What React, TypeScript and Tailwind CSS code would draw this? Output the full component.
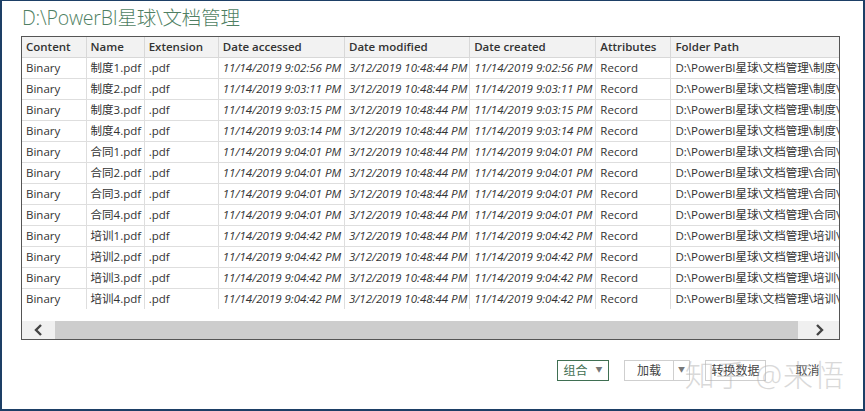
import React from 'react';

const rows = [
  ['制度1.pdf', '11/14/2019 9:02:56 PM', '11/14/2019 9:02:56 PM', '制度'],
  ['制度2.pdf', '11/14/2019 9:03:11 PM', '11/14/2019 9:03:11 PM', '制度'],
  ['制度3.pdf', '11/14/2019 9:03:15 PM', '11/14/2019 9:03:15 PM', '制度'],
  ['制度4.pdf', '11/14/2019 9:03:14 PM', '11/14/2019 9:03:14 PM', '制度'],
  ['合同1.pdf', '11/14/2019 9:04:01 PM', '11/14/2019 9:04:01 PM', '合同'],
  ['合同2.pdf', '11/14/2019 9:04:01 PM', '11/14/2019 9:04:01 PM', '合同'],
  ['合同3.pdf', '11/14/2019 9:04:01 PM', '11/14/2019 9:04:01 PM', '合同'],
  ['合同4.pdf', '11/14/2019 9:04:01 PM', '11/14/2019 9:04:01 PM', '合同'],
  ['培训1.pdf', '11/14/2019 9:04:42 PM', '11/14/2019 9:04:42 PM', '培训'],
  ['培训2.pdf', '11/14/2019 9:04:42 PM', '11/14/2019 9:04:42 PM', '培训'],
  ['培训3.pdf', '11/14/2019 9:04:42 PM', '11/14/2019 9:04:42 PM', '培训'],
  ['培训4.pdf', '11/14/2019 9:04:42 PM', '11/14/2019 9:04:42 PM', '培训'],
];

const font = { fontFamily: '"Open Sans", "Noto Sans CJK SC", sans-serif' };

export default function App() {
  return (
    <div
      className="w-[865px] h-[411px] bg-white border-[2px] border-t border-[#1d3f66] flex flex-col overflow-hidden text-[#333]"
      style={font}
    >
      <div className="pl-[20px] pt-[4px] h-[35px] text-[19.5px] font-light text-[#4f7f63] tracking-[-0.2px] leading-[26px]">
        D:\PowerBI星球\文档管理
      </div>

      <div className="ml-[19px] w-[819px] h-[304px] border border-[#555] flex flex-col">
        <div className="h-[272px] overflow-hidden">
          <table className="table-fixed border-collapse text-[11.5px] w-[1000px]">
            <colgroup>
              <col className="w-[64px]" />
              <col className="w-[58px]" />
              <col className="w-[74px]" />
              <col className="w-[126px]" />
              <col className="w-[125px]" />
              <col className="w-[126px]" />
              <col className="w-[75px]" />
              <col className="w-[350px]" />
            </colgroup>
            <thead>
              <tr className="h-[20px] bg-[#f2f2f2]">
                {['Content', 'Name', 'Extension', 'Date accessed', 'Date modified', 'Date created', 'Attributes', 'Folder Path'].map(h => (
                  <th key={h} className="text-left font-semibold px-[4px] border-r border-b border-[#d8d8d8] whitespace-nowrap text-[#333]">
                    {h}
                  </th>
                ))}
              </tr>
            </thead>
            <tbody>
              {rows.map(r => (
                <tr key={r[0]} className="h-[21px]">
                  <td className="px-[4px] border-r border-b border-[#dedede] whitespace-nowrap">Binary</td>
                  <td className="px-[4px] border-r border-b border-[#dedede] whitespace-nowrap">{r[0]}</td>
                  <td className="px-[4px] border-r border-b border-[#dedede] whitespace-nowrap">.pdf</td>
                  <td className="px-[4px] border-r border-b border-[#dedede] whitespace-nowrap italic">{r[1]}</td>
                  <td className="px-[4px] border-r border-b border-[#dedede] whitespace-nowrap italic">3/12/2019 10:48:44 PM</td>
                  <td className="px-[4px] border-r border-b border-[#dedede] whitespace-nowrap italic">{r[2]}</td>
                  <td className="px-[4px] border-r border-b border-[#dedede] whitespace-nowrap">Record</td>
                  <td className="px-[4px] border-r border-b border-[#dedede] whitespace-nowrap">D:\PowerBI星球\文档管理\{r[3]}\</td>
                </tr>
              ))}
            </tbody>
          </table>
        </div>
        <div className="mt-auto h-[18px] flex items-stretch bg-[#f0f0f0]">
          <div className="w-[33px] flex items-center justify-center">
            <svg width="10" height="12" viewBox="0 0 10 12">
              <path d="M7 1 L2 6 L7 11" fill="none" stroke="#444" strokeWidth="2.4" />
            </svg>
          </div>
          <div className="flex-1 bg-[#cdcdcd]" />
          <div className="w-[41px] flex items-center justify-center">
            <svg width="10" height="12" viewBox="0 0 10 12">
              <path d="M3 1 L8 6 L3 11" fill="none" stroke="#444" strokeWidth="2.4" />
            </svg>
          </div>
        </div>
      </div>

      <div className="relative flex items-center justify-end gap-[15px] pr-[23px] mt-[20px] text-[12px]">
        <div className="h-[21px] w-[52px] border border-[#3f6f52] flex items-center justify-center gap-[8px] text-[#3f6f52]">
          <span>组合</span>
          <span className="text-[7px] text-[#777]">▼</span>
        </div>
        <div className="h-[21px] w-[66px] border border-[#cfcfcf] flex items-stretch text-[#444]">
          <span className="flex-1 flex items-center justify-center">加载</span>
          <span className="w-[16px] border-l border-[#cfcfcf] flex items-center justify-center text-[7px] text-[#777]">▼</span>
        </div>
        <div className="flex gap-[9px]">
          <div className="h-[21px] w-[61px] border border-[#cfcfcf] flex items-center justify-center text-[#444]">转换数据</div>
          <div className="h-[21px] w-[65px] flex items-center justify-center text-[#444]">取消</div>
        </div>
        <div className="absolute right-[18px] top-[-8px] text-[30px] font-light text-[#b5b5b5] opacity-50 tracking-[1px] pointer-events-none">
          知乎 @来悟
        </div>
      </div>
    </div>
  );
}
